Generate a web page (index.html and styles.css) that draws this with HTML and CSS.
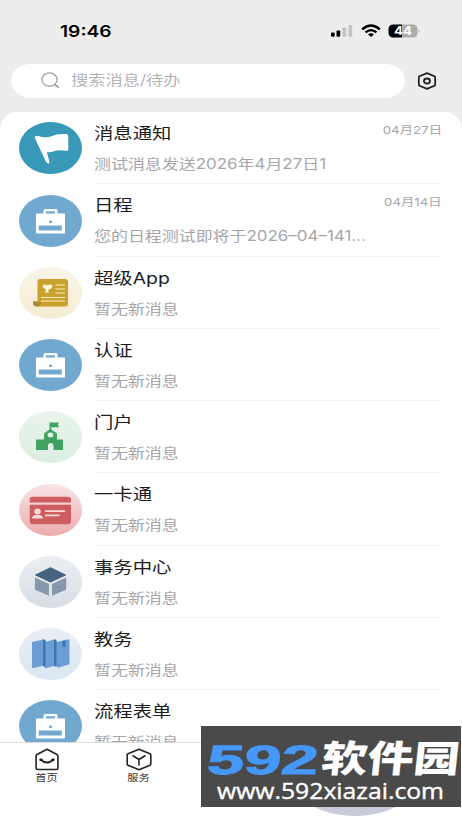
FILE: index.html
```html
<!DOCTYPE html>
<html lang="zh-CN">
<head>
<meta charset="utf-8">
<title>消息</title>
<link rel="stylesheet" href="styles.css">
</head>
<body>
<svg class="defs" width="0" height="0">
  <defs>
    <linearGradient id="gold" x1="0" y1="0" x2="0" y2="1"><stop offset="0" stop-color="#f9f5e9"/><stop offset="1" stop-color="#f5ecd2"/></linearGradient>
    <linearGradient id="green" x1="0" y1="0" x2="0" y2="1"><stop offset="0" stop-color="#e9f4ec"/><stop offset="1" stop-color="#dceee2"/></linearGradient>
    <linearGradient id="red" x1="0" y1="0" x2="0" y2="1"><stop offset="0" stop-color="#f8e4e4"/><stop offset="1" stop-color="#ecadae"/></linearGradient>
    <linearGradient id="slate" x1="0" y1="0" x2="0" y2="1"><stop offset="0" stop-color="#ebeff3"/><stop offset="1" stop-color="#d7dde4"/></linearGradient>
    <linearGradient id="sky" x1="0" y1="0" x2="0" y2="1"><stop offset="0" stop-color="#e9eff6"/><stop offset="1" stop-color="#dae6f2"/></linearGradient>
    <symbol id="briefcase" viewBox="0 0 63 52">
      <ellipse cx="31.5" cy="26" rx="31.5" ry="26" fill="#70a8cf"/>
      <path d="M18 18.500h6.500v-3q0-1.500 1.500-1.500h11q1.500 0 1.500 1.500v3h6.500q1 0 1 1v18q0 1-1 1h-27q-1 0-1-1v-18q0-1 1-1z" fill="#fff"/>
      <path d="M27 16.300h9v2.200h-9zM19.800 30.500h23v5h-23z" fill="#70a8cf"/>
      <circle cx="31.500" cy="26.800" r="1.500" fill="#70a8cf"/>
    </symbol>
  </defs>
</svg>
<div class="phone">
  <header class="status">
    <span class="clock">19:46</span>
    <svg class="signals" width="92" height="16" viewBox="0 0 92 16">
      <rect x="1" y="9.500" width="3.700" height="4.300" rx="1"/>
      <rect x="6.500" y="7.500" width="3.700" height="6.300" rx="1"/>
      <rect x="12.500" y="4.500" width="3.700" height="9.300" rx="1" fill="#c3c3c3"/>
      <rect x="18.500" y="2" width="3.700" height="11.800" rx="1" fill="#c3c3c3"/>
      <g fill="none" stroke="#000" stroke-width="2.300"><path d="M32.200 6.300Q41-1.400 49.800 6.300"/><path d="M35.500 9.400Q41 4.800 46.500 9.400"/></g>
      <path d="M38 11.300q3-2.200 6 0l-3 2.700z"/>
      <path d="M72 1.500h-9a4.500 4.500 0 0 0-4.500 4.500v4a4.500 4.500 0 0 0 4.500 4.500h9z"/>
      <path d="M72 1.500h11a4.500 4.500 0 0 1 4.500 4.500v4a4.500 4.500 0 0 1-4.500 4.500h-11zM88.500 6q2 2 0 4z" fill="#adadad"/>
      <text x="64" y="12.300" textLength="18" lengthAdjust="spacingAndGlyphs" class="charge">44</text>
    </svg>
  </header>
  <div class="tools">
    <div class="search">
      <svg width="19" height="17" viewBox="0 0 19 17" fill="none" stroke="#a6a6aa" stroke-width="1.400"><ellipse cx="8.500" cy="7.600" rx="7.600" ry="6.700"/><path d="M13.800 12.500l4 3.300" stroke-width="1.900"/></svg>
      <span>搜索消息/待办</span>
    </div>
    <svg width="20" height="18" viewBox="0 0 20 18" fill="none" stroke="#222" stroke-width="1.800" stroke-linejoin="round"><path d="M10 1.200L18 4.500Q18.500 9 18 13.500L10 16.800 2 13.500Q1.500 9 2 4.500z"/><ellipse cx="10" cy="9" rx="3" ry="2.500"/></svg>
  </div>
  <main class="list">
    <article class="row">
      <svg class="icon" viewBox="0 0 63 52"><ellipse cx="31.500" cy="26" rx="31.500" ry="26" fill="#3898b8"/><path d="M15.500 15q2-1.700 4-.9 6 2.300 12 .3 8-3.200 16-2.300 1.800.3 1.800 2v13q0 2-2 1.900-7-1.500-12.500.3-4 1.500-7 .6l2.700 10.200q0 2-2 1.100l-1.500-1.500-8.500-18z" fill="#fff"/></svg>
      <div class="body"><div class="top"><h2>消息通知</h2><time>04月27日</time></div><p>测试消息发送2026年4月27日1</p></div>
    </article>
    <article class="row">
      <svg class="icon"><use href="#briefcase"/></svg>
      <div class="body"><div class="top"><h2>日程</h2><time>04月14日</time></div><p>您的日程测试即将于2026–04–141…</p></div>
    </article>
    <article class="row">
      <svg class="icon" viewBox="0 0 63 52"><ellipse cx="31.500" cy="26" rx="31.500" ry="26" fill="url(#gold)"/><path d="M21 12h25q3 0 3 2.500v22.500q0 2.500-3 2.500H19q-5 0-5-3.500v-1.500h4.500v-20q0-2.500 2.500-2.500z" fill="#c9a22d"/><path d="M14 36q0 3.500 4.500 3.500 3.500 0 3.500-3.500l-3.500-1.500H14z" fill="#ab8b35"/><path d="M23.500 19q2.200-2.500 4.500-.5 3-2 5.500 0-.5 3.500-4.500 4.500l1 2.500h-4l1-3q-3-1-3.500-3.500z" fill="#fff8df"/><path d="M36.500 18H46M36.500 22H46M36.500 26H46M22 30.500h24M22 34h24" stroke="#f9efc8" stroke-width="1.200"/></svg>
      <div class="body"><div class="top"><h2>超级App</h2></div><p>暂无新消息</p></div>
    </article>
    <article class="row">
      <svg class="icon"><use href="#briefcase"/></svg>
      <div class="body"><div class="top"><h2>认证</h2></div><p>暂无新消息</p></div>
    </article>
    <article class="row">
      <svg class="icon" viewBox="0 0 63 52"><ellipse cx="31.500" cy="26" rx="31.500" ry="26" fill="url(#green)"/><path d="M30.500 11.500H40l-1.200 2.300 1.200 2.400h-7.800v2.300l5.800 4v6h5q1 0 1 1v9.500h-9.500v-4q0-3-2.800-3t-2.800 3v4H17V29.500q0-1 1-1h7v-6l5.500-4z" fill="#40a362"/><ellipse cx="31.500" cy="24" rx="2.900" ry="2.500" fill="#e3f2e7"/></svg>
      <div class="body"><div class="top"><h2>门户</h2></div><p>暂无新消息</p></div>
    </article>
    <article class="row">
      <svg class="icon" viewBox="0 0 63 52"><ellipse cx="31.500" cy="26" rx="31.500" ry="26" fill="url(#red)"/><path d="M13.500 12.700h35.500q3 0 3 2.800v3H10.700v-3q0-2.800 2.800-2.800zM10.700 20.700H52v16.500q0 3-3 3H13.500q-2.800 0-2.800-3z" fill="#cd5d60"/><g fill="#f8d9d9"><ellipse cx="18.500" cy="27.500" rx="3.200" ry="3"/><path d="M13 34.500q0-3.500 4-3.500h3q4 0 4 3.500z"/><path d="M26 26.300h20v1.800H26zM26 30.500h14.500v1.800H26z"/></g></svg>
      <div class="body"><div class="top"><h2>一卡通</h2></div><p>暂无新消息</p></div>
    </article>
    <article class="row">
      <svg class="icon" viewBox="0 0 63 52"><ellipse cx="31.500" cy="26" rx="31.500" ry="26" fill="url(#slate)"/><path d="M31.500 11.700L46.500 19 31.500 26 16.500 19z" fill="#47627f" stroke="#47627f" stroke-linejoin="round"/><path d="M16 21.500L30 28v11.800L16.500 34q-.7-.4-.7-1zM47.200 21.500L33 28v11.800L46.500 34q.7-.4.700-1z" fill="#8798ac"/></svg>
      <div class="body"><div class="top"><h2>事务中心</h2></div><p>暂无新消息</p></div>
    </article>
    <article class="row">
      <svg class="icon" viewBox="0 0 63 52"><ellipse cx="31.500" cy="26" rx="31.500" ry="26" fill="url(#sky)"/><path d="M13 14l12-2.700 1.500 1v25l-12.500 3-1-1zM25.500 14l10.500-2.700 1.500 1v25l-11 3-1-1zM37.500 14l12-2.700 1 1v24l-11.500 3.500-1.500-1z" fill="#6b9fd3"/><path d="M24 11.500l2.500.8V38l-2.500.7zM35 11.500l2.500.8V38l-2.500.7zM43.500 13l3-.7v7l-1.500-1-1.500 1.500z" fill="#3f75b2"/></svg>
      <div class="body"><div class="top"><h2>教务</h2></div><p>暂无新消息</p></div>
    </article>
    <article class="row">
      <svg class="icon"><use href="#briefcase"/></svg>
      <div class="body"><div class="top"><h2>流程表单</h2></div><p>暂无新消息</p></div>
    </article>
  </main>
  <nav class="tabs">
    <a class="tab">
      <svg width="26" height="23" viewBox="0 0 26 23" fill="none" stroke="#222" stroke-width="1.600" stroke-linejoin="round" stroke-linecap="round"><path d="M13 1.300L3 6.500q-.9.600-.9 1.500v12q0 1.500 1.500 1.500h18.800q1.500 0 1.500-1.500V8q0-.9-.9-1.500z"/><path d="M7 12q6 5 12 0" stroke-width="2"/><path d="M6.500 11.800h1M18.500 11.800h1" stroke-width="2.500"/></svg>
      <span>首页</span>
    </a>
    <a class="tab">
      <svg width="26" height="23" viewBox="0 0 26 23" fill="none" stroke="#222" stroke-width="1.600" stroke-linejoin="round"><path d="M13 1.300l11 4.500q.8.400.8 1.200v9q0 .8-.8 1.200L13 21.700 2 17.200q-.8-.4-.8-1.200V7q0-.8.800-1.200zM6.500 7.500L13 11.500l6.500-4M13 11.500v6"/></svg>
      <span>服务</span>
    </a>
  </nav>
</div>
<div class="bubble"></div>
<aside class="badge">
  <svg width="260" height="81" viewBox="0 0 260 81">
    <g transform="translate(0 48) skewX(-6)">
      <text class="num" x="5" y="0" textLength="111" lengthAdjust="spacingAndGlyphs">592</text>
      <text class="name" x="119" y="-2" textLength="138" lengthAdjust="spacingAndGlyphs">软件园</text>
    </g>
    <text class="url" x="16" y="73" textLength="227" lengthAdjust="spacingAndGlyphs">www.592xiazai.com</text>
  </svg>
</aside>
</body>
</html>
```
FILE: styles.css
```css
* { box-sizing: border-box; }
body {
  margin: 0;
  width: 462px;
  height: 821px;
  overflow: hidden;
  position: relative;
  background: #ededed;
  font-family: Inter, "Noto Sans CJK SC", sans-serif;
}
.defs { position: absolute; }
.phone { height: 821px; display: flex; flex-direction: column; }
.status {
  height: 62px;
  flex: none;
  display: flex;
  justify-content: space-between;
  align-items: center;
  padding: 0 40px 0 60px;
}
.clock {
  font: 600 16px/20px Inter, sans-serif;
  transform: scaleX(1.2);
  transform-origin: left;
}
.charge { font: 700 12px Inter, sans-serif; fill: #fff; }
.tools {
  height: 50px;
  flex: none;
  display: flex;
  align-items: flex-start;
  gap: 12px;
  padding: 2px 25px 0 11px;
}
.tools > svg { margin-top: 8px; }
.search {
  width: 394px;
  height: 34px;
  border-radius: 20px / 17px;
  background: #fff;
  display: flex;
  align-items: center;
  gap: 11px;
  padding: 0 0 2px 30px;
}
.search svg { margin-top: 1px; }
.search span {
  font-size: 14px;
  line-height: 20px;
  color: #b4b4b8;
  transform: scaleX(1.230);
  transform-origin: left;
}
.list {
  flex: 1;
  min-height: 0;
  overflow: hidden;
  background: #fff;
  border-radius: 18px 18px 0 0;
}
.row {
  height: 72.250px;
  display: flex;
  gap: 12px;
  padding: 0 20px 0 19px;
}
.icon { width: 63px; height: 52px; margin-top: 10.300px; flex: none; }
.body { flex: 1; border-bottom: 1px solid #efefef; padding-top: 10px; }
.top { display: flex; justify-content: space-between; height: 22px; }
h2, p, time { white-space: nowrap; transform: scaleX(1.210); transform-origin: left; }
h2 { margin: 0; font-size: 16px; font-weight: 400; line-height: 22px; color: #1c1c1c; }
p { margin: 10px 0 0; font-size: 14px; line-height: 20px; color: #a5a6aa; }
time { font-size: 11px; line-height: 17px; color: #a5a6aa; transform-origin: right; }
.tabs {
  height: 79px;
  flex: none;
  display: flex;
  background: #fff;
  border-top: 1px solid #dcdcdc;
  padding-left: 1px;
}
.tab {
  width: 92px;
  padding-top: 5px;
  display: flex;
  flex-direction: column;
  align-items: center;
}
.tab span { font-size: 9.500px; line-height: 14px; color: #333; transform: scaleX(1.180); }
.badge {
  position: absolute;
  left: 201px;
  top: 726px;
  width: 260px;
  height: 81px;
  background: #4a4a4a;
}
.badge svg { display: block; }
.bubble {
  position: absolute;
  left: 287px;
  top: 726px;
  width: 136px;
  height: 90px;
  border-radius: 50%;
  background: #c9cada;
}
.num { font: 700 41px "Liberation Sans", sans-serif; fill: #4597f8; stroke: #4597f8; }
.name { font: 900 37px "Noto Sans CJK SC", sans-serif; fill: #fff; }
.url { font: 400 22px "Open Sans", sans-serif; fill: #fff; stroke: #fff; stroke-width: .4; }
```
